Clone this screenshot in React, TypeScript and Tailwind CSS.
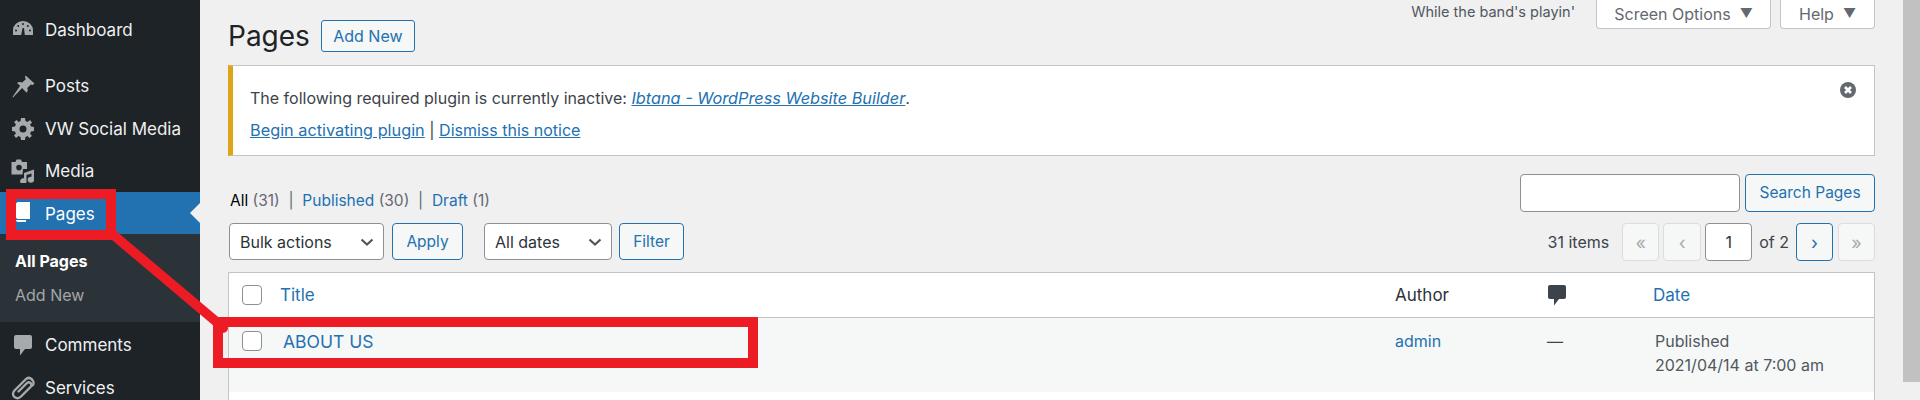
const font = "font-['Inter','Noto_Sans',sans-serif]";

function Gauge() {
  return (
    <svg width="20" height="20" viewBox="0 0 20 20" className="text-[#a7aaad] fill-current">
      <path d="M0 15 V10 A10 9 0 0 1 20 10 V15 H11.8 L11 8 L9.6 8 L8.2 15 Z" />
      <g fill="#1d2327">
        <circle cx="10" cy="4" r="1" />
        <circle cx="5.2" cy="6" r="1" />
        <circle cx="14.8" cy="6" r="1" />
        <circle cx="3" cy="10.5" r="1" />
        <circle cx="17" cy="10.5" r="1" />
      </g>
    </svg>
  );
}
function Pin() {
  return (
    <svg width="23" height="23" viewBox="0 0 22 22" className="text-[#a7aaad] fill-current">
      <path d="M13 0.5 L21.5 8.2 L19.8 9.6 L18 9 L14.6 12.4 C15.4 14.2 15 15.8 14 17 L9.6 12.4 L1 21.5 L0.5 21 L7.8 10.4 L4.8 7.6 C6.2 6.6 8 6.4 9.8 7.2 L13.2 4 L12.4 2 Z" />
    </svg>
  );
}
function Gear() {
  return (
    <svg width="22" height="22" viewBox="0 0 22 22" className="text-[#a7aaad] fill-current">
      <path fillRule="evenodd" d="M9 0 H13 L13.5 3 L15.5 3.9 L18 2.1 L20 4.6 L18.1 6.5 L19 8.6 L22 9 V13 L19 13.5 L18.1 15.5 L19.9 18 L17.4 20 L15.5 18.1 L13.4 19 L13 22 H9 L8.5 19 L6.5 18.1 L4 19.9 L2 17.4 L3.9 15.5 L3 13.4 L0 13 V9 L3 8.5 L3.9 6.5 L2.1 4 L4.6 2 L6.5 3.9 L8.6 3 Z M11 7.5 A3.5 3.5 0 1 0 11 14.5 A3.5 3.5 0 1 0 11 7.5 Z" />
    </svg>
  );
}
function MediaIcon() {
  return (
    <svg width="24" height="24" viewBox="0 0 24 24" className="text-[#a7aaad] fill-current">
      <path fillRule="evenodd" d="M0.5 3 H4.5 L5.5 0.5 H10 L11 3 H16 V10 H12 L11.5 15.5 H0.5 Z M8 5.8 A2.8 2.8 0 1 0 8 11.4 A2.8 2.8 0 1 0 8 5.8 Z" />
      <path d="M13 14 L23 10.5 V20.5 A3.2 3 0 1 1 20.5 17.8 V14.4 L15.5 16 V22 A3.2 3 0 1 1 13 19.3 Z" />
    </svg>
  );
}
function Book() {
  return (
    <svg width="16" height="22" viewBox="0 0 16 22" className="text-white fill-current">
      <path d="M3 0 H15 V17 H3 C2 17 1 16 1 15 V2 C1 1 2 0 3 0 Z" />
      <path d="M1 18 H11 V20 H3 C2 20 1 19 1 18 Z" />
    </svg>
  );
}
function Bubble({ className }: { className: string }) {
  return (
    <svg width="18" height="21" viewBox="0 0 18 21" className={className + " fill-current"}>
      <path d="M2 0 H16 A2 2 0 0 1 18 2 V12 A2 2 0 0 1 16 14 H11 L6 20.5 V14 H2 A2 2 0 0 1 0 12 V2 A2 2 0 0 1 2 0 Z" />
    </svg>
  );
}
function Clip() {
  return (
    <svg width="24" height="24" viewBox="0 0 24 24" fill="none" stroke="#a7aaad" strokeWidth="2.4" strokeLinecap="round">
      <path d="M21 3.5 C19 1.5 16.5 1.5 14.5 3.5 L3.5 14.5 C1.5 16.5 1.5 19.5 3.5 21 C5.5 22.5 8 22.5 10 20.5 L19.5 11 C20.8 9.7 20.8 8 19.5 7 C18.3 6 16.8 6 15.5 7.5 L7.5 15.5" />
      <path d="M21 3.5 C23 5.5 23 8 21.5 9.5" />
    </svg>
  );
}

function MenuItem({ icon, label, h, active }: { icon: React.ReactNode; label: string; h: string; active?: boolean }) {
  return (
    <div className={`${h} shrink-0 flex items-center relative ${active ? "bg-[#2271b1] text-white" : "text-[#f0f0f1]"}`}>
      <div className="w-[45px] flex justify-center shrink-0 pl-[1px]">{icon}</div>
      <span className={`text-[17px] ${active ? "mt-[3px]" : "mt-[2px]"}`}>{label}</span>
      {active && (
        <div className="absolute right-0 top-[11px] w-0 h-0 border-y-[10px] border-y-transparent border-r-[10px] border-r-[#f0f0f1]" />
      )}
    </div>
  );
}

function Sidebar() {
  return (
    <div className="w-[200px] shrink-0 bg-[#1d2327] flex flex-col pt-[9px] overflow-hidden">
      <MenuItem h="h-[42px]" icon={<Gauge />} label="Dashboard" />
      <div className="h-[14px] shrink-0" />
      <MenuItem h="h-[42px]" icon={<Pin />} label="Posts" />
      <MenuItem h="h-[43px]" icon={<Gear />} label="VW Social Media" />
      <MenuItem h="h-[42px]" icon={<MediaIcon />} label="Media" />
      <MenuItem h="h-[42px]" active icon={<Book />} label="Pages" />
      <div className="h-[88px] shrink-0 bg-[#2c3338] pl-[15px] pt-[10px] text-[16px] flex flex-col">
        <span className="h-[34px] flex items-center font-bold text-white">All Pages</span>
        <span className="h-[34px] flex items-center text-[#a3a6a9]">Add New</span>
      </div>
      <div className="h-[1px] shrink-0" />
      <MenuItem h="h-[44px]" icon={<Bubble className="text-[#a7aaad]" />} label="Comments" />
      <MenuItem h="h-[41px]" icon={<Clip />} label="Services" />
    </div>
  );
}

function Btn({ children, className }: { children: React.ReactNode; className: string }) {
  return (
    <div className={`h-[37px] flex items-center justify-center rounded-[4px] border border-[#2271b1] bg-[#f6f7f7] text-[#2271b1] text-[15.5px] ${className}`}>
      {children}
    </div>
  );
}

function Select({ label, className }: { label: string; className: string }) {
  return (
    <div className={`h-[37px] flex items-center justify-between rounded-[4px] border border-[#8c8f94] bg-white pl-[10px] pr-[8px] text-[#2c3338] text-[16px] ${className}`}>
      <span>{label}</span>
      <svg width="16" height="16" viewBox="0 0 16 16" fill="none" stroke="#50575e" strokeWidth="2.2">
        <path d="M2.5 5.5 L8 10.5 L13.5 5.5" />
      </svg>
    </div>
  );
}

function PageBtn({ children, on, className }: { children: string; on?: boolean; className: string }) {
  return (
    <div className={`h-[38px] flex items-center justify-center rounded-[4px] border text-[18px] ${on ? "border-[#2271b1] text-[#2271b1] bg-[#f6f7f7]" : "border-[#dcdcde] text-[#a7aaad] bg-[#f6f7f7]"} ${className}`}>
      {children}
    </div>
  );
}

function Checkbox() {
  return <div className="w-[20px] h-[20px] rounded-[4px] border border-[#8c8f94] bg-white shrink-0" />;
}

function Main() {
  return (
    <div className="flex-1 min-w-0 flex flex-col pl-[28px] pr-[28px]">
      <div className="h-[30px] flex justify-end relative">
        <span className="text-[#50575e] text-[14.5px] mr-[21px] leading-[24px]">While the band's playin'</span>
        <div className="w-[175px] h-[30px] mr-[9px] bg-white border border-t-0 border-[#c3c4c7] rounded-b-[4px] flex items-center justify-center text-[16px] text-[#646970] gap-[9px] -mt-px">
          Screen Options<span className="text-[13px]">▼</span>
        </div>
        <div className="w-[95px] h-[30px] bg-white border border-t-0 border-[#c3c4c7] rounded-b-[4px] flex items-center justify-center text-[16px] text-[#646970] gap-[9px] -mt-px">
          Help<span className="text-[13px]">▼</span>
        </div>
      </div>

      <div className="h-[35px] flex items-start">
        <h1 className="text-[28px] leading-[12px] text-[#1d2327] font-normal">Pages</h1>
        <div className="ml-[11px] -mt-[10px] w-[94px] h-[32px] flex items-center justify-center rounded-[3px] border border-[#2271b1] bg-[#f6f7f7] text-[#2271b1] text-[16px]">
          Add New
        </div>
      </div>

      <div className="h-[91px] bg-white border border-[#c3c4c7] border-l-[5px] border-l-[#dba617] flex justify-between pl-[17px] pr-[18px] pt-[21px] text-[16px] text-[#3c434a]">
        <div className="flex flex-col gap-[10px] leading-[22px]">
          <div>
            The following required plugin is currently inactive:{" "}
            <a className="italic text-[#2271b1] underline text-[16.3px]">Ibtana - WordPress Website Builder</a>.
          </div>
          <div>
            <a className="text-[#2271b1] underline text-[16.3px]">Begin activating plugin</a> |{" "}
            <a className="text-[#2271b1] underline">Dismiss this notice</a>
          </div>
        </div>
        <svg width="16" height="16" viewBox="0 0 16 16" className="-mt-[5px]">
          <circle cx="8" cy="8" r="8" fill="#646970" />
          <path d="M5 5 L11 11 M11 5 L5 11" stroke="#fff" strokeWidth="2.6" />
        </svg>
      </div>

      <div className="h-[67px] flex justify-between items-start">
        <div className="mt-[34px] ml-[2px] text-[15.5px] leading-[22px] text-[#646970] whitespace-pre">
          <span className="text-[#000]">All</span> (31)  |  <span className="text-[#2271b1]">Published</span> (30)  |  <span className="text-[#2271b1]">Draft</span> (1)
        </div>
        <div className="flex mt-[18px] gap-[5px]">
          <div className="w-[220px] h-[38px] bg-white border border-[#8c8f94] rounded-[4px]" />
          <Btn className="w-[130px] h-[38px]">Search Pages</Btn>
        </div>
      </div>

      <div className="h-[49px] flex items-start">
        <Select label="Bulk actions" className="ml-[1px] w-[155px]" />
        <Btn className="ml-[8px] w-[71px]">Apply</Btn>
        <Select label="All dates" className="ml-[21px] w-[128px]" />
        <Btn className="ml-[7px] w-[65px]">Filter</Btn>
        <div className="ml-auto flex items-center text-[16px] text-[#3c434a]">
          <span className="mr-[13px]">31 items</span>
          <PageBtn className="w-[37px]">«</PageBtn>
          <PageBtn className="w-[38px] ml-[4px]">‹</PageBtn>
          <div className="w-[47px] h-[38px] ml-[4px] flex items-center justify-center bg-white border border-[#8c8f94] rounded-[4px] text-[#2c3338]">1</div>
          <span className="mx-[7px]">of 2</span>
          <PageBtn on className="w-[37px]">›</PageBtn>
          <PageBtn className="w-[37px] ml-[5px]">»</PageBtn>
        </div>
      </div>

      <div className="flex-1 bg-white border border-[#c3c4c7] border-b-0 text-[16px]">
        <div className="h-[45px] flex items-center border-b border-[#c3c4c7]">
          <div className="w-[51px] pl-[13px]"><Checkbox /></div>
          <span className="text-[#2271b1] text-[17px] mt-[2px]">Title</span>
          <span className="ml-auto w-[153px] text-[#2c3338] text-[17px] mt-[2px]">Author</span>
          <div className="w-[105px] mt-[1px]"><Bubble className="text-[#3c434a]" /></div>
          <span className="w-[221px] text-[#2271b1] text-[17px] mt-[2px]">Date</span>
        </div>
        <div className="h-[74px] flex bg-[#f6f7f7] pt-[13px]">
          <div className="w-[54px] pl-[13px]"><Checkbox /></div>
          <span className="text-[#2271b1] text-[17.5px] leading-[22px]">ABOUT US</span>
          <span className="ml-auto w-[152px] text-[#2271b1] leading-[20px]">admin</span>
          <span className="w-[108px] text-[#3c434a] leading-[20px]">—</span>
          <div className="w-[219px] text-[#50575e] leading-[24px] -mt-[2px]">
            Published
            <br />
            2021/04/14 at 7:00 am
          </div>
        </div>
      </div>
    </div>
  );
}

function Annotation() {
  return (
    <>
      <div className="absolute left-[6px] top-[189px] w-[110px] h-[51px] border-[10px] border-[#ed1c24]" />
      <div className="absolute left-[213px] top-[317px] w-[545px] h-[51px] border-[10px] border-[#ed1c24]" />
      <svg className="absolute left-0 top-0" width="300" height="400" viewBox="0 0 300 400">
        <path d="M108 230.4 L222 326.5" stroke="#ed1c24" strokeWidth="9.5" fill="none" />
        <circle cx="223" cy="328" r="5" fill="#ed1c24" />
      </svg>
    </>
  );
}

export default function App() {
  return (
    <div className={`relative w-[1920px] h-[400px] overflow-hidden flex bg-[#f0f0f1] ${font}`}>
      <Sidebar />
      <Main />
      <div className="w-[17px] shrink-0 flex flex-col">
        <div className="h-[382px] bg-[#c1c1c1]" />
      </div>
      <Annotation />
    </div>
  );
}
